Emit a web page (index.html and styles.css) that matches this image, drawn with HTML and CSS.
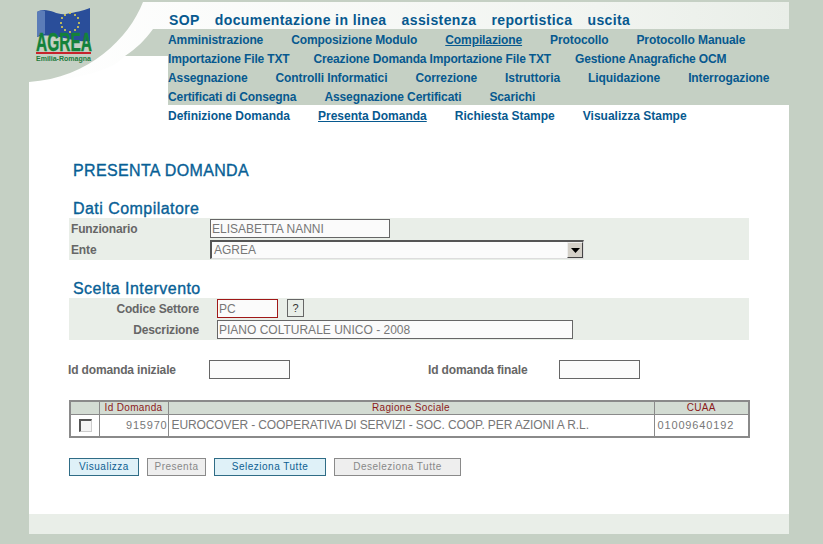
FILE: index.html
```html
<!DOCTYPE html>
<html lang="it">
<head>
<meta charset="utf-8">
<title>Presenta Domanda</title>
<link rel="stylesheet" href="styles.css">
</head>
<body>
<div class="page">
  <header class="header">
    <svg class="header-bg" width="760" height="105" viewBox="0 0 760 105">
      <defs>
        <linearGradient id="fade" x1="0" y1="0" x2="1" y2="0">
          <stop offset="0" stop-color="#ffffff"/>
          <stop offset="0.75" stop-color="#f1f4f0"/>
          <stop offset="1" stop-color="#e9eee8"/>
        </linearGradient>
      </defs>
      <rect x="139" y="29" width="621" height="76" fill="#c5d0c4"/>
      <path d="M0 82C50 80 84 70 96 56L139 56L139 29L760 29L760 2L114 2C100 30 66 76 0 82Z" fill="url(#fade)"/>
      <path d="M124 29L139 29L139 56L96 56C108 48 116 40 124 29Z" fill="#c5d0c4"/>
      <path d="M0 0L760 0L760 2L114 2C100 38 60 78 0 82Z" fill="#c5d0c4"/>
    </svg>
    <div class="logo">
      <svg class="flag" width="56" height="36" viewBox="0 0 56 36">
        <path d="M1 5C12 -1 20 9 30 7C40 5 46 4 54 1L54 34C44 35 38 33 28 31C18 29 10 27 1 30Z" fill="#2a4e9a"/>
        <path d="M1 5C4 3 7 3 9 4L9 27C6 27 3 28 1 30Z" fill="#5b7cb8"/>
        <g fill="#e8d84a">
          <circle cx="34" cy="6" r="1"/><circle cx="39" cy="8" r="1"/><circle cx="42" cy="11" r="1"/><circle cx="43" cy="16" r="1"/><circle cx="42" cy="20" r="1"/><circle cx="39" cy="23" r="1"/><circle cx="34" cy="25" r="1"/><circle cx="29" cy="23" r="1"/><circle cx="26" cy="20" r="1"/><circle cx="25" cy="16" r="1"/><circle cx="26" cy="11" r="1"/><circle cx="29" cy="8" r="1"/>
        </g>
      </svg>
      <div class="logo-name">AGREA</div>
      <div class="logo-rule"></div>
      <div class="logo-sub">Emilia-Romagna</div>
    </div>
    <nav class="menu">
      <div class="menu-top"><a>SOP</a><a>documentazione in linea</a><a>assistenza</a><a>reportistica</a><a>uscita</a></div>
      <div class="menu-row"><a>Amministrazione</a><a>Composizione Modulo</a><a class="on">Compilazione</a><a>Protocollo</a><a>Protocollo Manuale</a></div>
      <div class="menu-row menu-row-tight"><a>Importazione File TXT</a><a>Creazione Domanda Importazione File TXT</a><a>Gestione Anagrafiche OCM</a></div>
      <div class="menu-row"><a>Assegnazione</a><a>Controlli Informatici</a><a>Correzione</a><a>Istruttoria</a><a>Liquidazione</a><a>Interrogazione</a></div>
      <div class="menu-row"><a>Certificati di Consegna</a><a>Assegnazione Certificati</a><a>Scarichi</a></div>
      <div class="menu-row menu-row-last"><a>Definizione Domanda</a><a class="on">Presenta Domanda</a><a>Richiesta Stampe</a><a>Visualizza Stampe</a></div>
    </nav>
  </header>

  <main class="main">
    <h1 class="title">PRESENTA DOMANDA</h1>

    <h2 class="section section-first">Dati Compilatore</h2>
    <div class="band">
      <div class="frow frow-a">
        <label class="lab lab-left">Funzionario</label>
        <input class="field f-funz" value="ELISABETTA NANNI" readonly>
      </div>
      <div class="frow frow-a">
        <label class="lab lab-left">Ente</label>
        <div class="select"><span class="select-val">AGREA</span><span class="select-btn"><svg width="9" height="5" viewBox="0 0 9 5"><path d="M0 0H9L4.5 5Z" fill="#000"/></svg></span></div>
      </div>
    </div>

    <h2 class="section section-second">Scelta Intervento</h2>
    <div class="band">
      <div class="frow frow-b">
        <label class="lab lab-right">Codice Settore</label>
        <input class="field f-cod" value="PC" readonly>
        <button class="qbtn">?</button>
      </div>
      <div class="frow frow-b">
        <label class="lab lab-right">Descrizione</label>
        <input class="field f-desc" value="PIANO COLTURALE UNICO - 2008" readonly>
      </div>
    </div>

    <div class="idrow">
      <label class="lab id-lab">Id domanda iniziale</label>
      <input class="field f-id">
      <label class="lab id-lab id-lab2">Id domanda finale</label>
      <input class="field f-id">
    </div>

    <table class="grid">
      <colgroup><col class="c1"><col class="c2"><col class="c3"><col class="c4"></colgroup>
      <thead>
        <tr><th></th><th>Id Domanda</th><th>Ragione Sociale</th><th>CUAA</th></tr>
      </thead>
      <tbody>
        <tr>
          <td class="cell-check"><span class="check"></span></td>
          <td class="cell-num">915970</td>
          <td class="cell-name">EUROCOVER - COOPERATIVA DI SERVIZI - SOC. COOP. PER AZIONI A R.L.</td>
          <td class="cell-cuaa">01009640192</td>
        </tr>
      </tbody>
    </table>

    <div class="actions">
      <button class="btn btn-on b-vis">Visualizza</button>
      <button class="btn btn-off b-pre">Presenta</button>
      <button class="btn btn-on b-sel">Seleziona Tutte</button>
      <button class="btn btn-off b-des">Deseleziona Tutte</button>
    </div>
  </main>
  <footer class="footer"></footer>
</div>
</body>
</html>
```
FILE: styles.css
```css
* { box-sizing: border-box; }
html, body { margin: 0; padding: 0; }
body {
  background: #c5d0c4;
  height: 544px;
  overflow: hidden;
  font-family: "Liberation Sans", Arial, sans-serif;
}
.page {
  position: relative;
  width: 760px;
  height: 534px;
  margin-left: 29px;
  background: #fff;
  display: flex;
  flex-direction: column;
}
.header { position: relative; height: 105px; flex: none; }
.header-bg { position: absolute; left: 0; top: 0; display: block; }

.logo { position: absolute; left: 7px; top: 7px; width: 56px; height: 56px; }
.flag { display: block; }
.logo-name {
  position: absolute; left: 0; top: 22px;
  font: bold 25px/26px "Liberation Sans", sans-serif;
  color: #13823a;
  -webkit-text-stroke: .4px #13823a;
  transform: scaleX(.62);
  transform-origin: 0 0;
}
.logo-rule { position: absolute; left: 0; top: 45px; width: 55px; height: 2px; background: #c8232c; }
.logo-sub {
  position: absolute; left: 0; top: 47px;
  font: bold 7px/9px "Liberation Sans", sans-serif;
  color: #1f7a3c;
  white-space: nowrap;
}

.menu { position: relative; padding: 10px 0 0 139px; color: #07598f; }
.menu a { color: #07598f; white-space: nowrap; }
.menu-top {
  display: flex; gap: 15px; height: 21px; align-items: center;
  padding-left: 1px; padding-bottom: 1px;
  font: bold 14px/20px "Liberation Sans", sans-serif;
  letter-spacing: .4px;
}
.menu-row {
  display: flex; gap: 28px; height: 19px; align-items: center;
  font: bold 12px/19px "Liberation Sans", sans-serif;
  letter-spacing: -.1px;
}
.menu-row-tight { gap: 24px; letter-spacing: -.15px; }
.menu-row-last { letter-spacing: 0; gap: 28px; }
.menu-row .on { text-decoration: underline; }

.main { flex: 1; padding: 0 0 0 40px; }
.title {
  margin: 56px 0 0 4px;
  font: normal 16px/20px "Liberation Sans", sans-serif;
  letter-spacing: .35px;
  color: #085f96;
  -webkit-text-stroke: .35px #085f96;
}
.section {
  margin: 0 0 0 4px;
  padding-top: 1px;
  font: normal 16px/20px "Liberation Sans", sans-serif;
  letter-spacing: .45px;
  color: #085f96;
  -webkit-text-stroke: .35px #085f96;
  height: 20px;
}
.section-first { margin-top: 17px; }
.section-second { margin-top: 18px; }
.band { width: 680px; height: 42px; background: #e9eee8; padding-top: 1px; }
.frow { display: flex; height: 21px; align-items: flex-start; }
.lab {
  font: bold 12px/21px "Liberation Sans", sans-serif;
  letter-spacing: -.15px;
  color: #666;
  white-space: nowrap;
}
.lab-left { width: 141px; padding-left: 2px; }
.lab-right { width: 130px; margin-right: 18px; text-align: right; }
.field {
  display: block;
  height: 19px;
  padding: 0 1px;
  border: 1px solid #666;
  background: #fbfbfb;
  color: #777;
  font: 12px/17px "Liberation Sans", sans-serif;
  border-radius: 0;
  outline: 0;
}
.f-funz { width: 180px; }
.f-cod { width: 61px; border-color: #a01818; }
.f-desc { width: 356px; }
.f-id { width: 81px; }
.select {
  width: 374px; height: 19px;
  display: flex; align-items: center;
  justify-content: space-between;
  background: #fbfbfb;
  border-top: 2px solid #555;
  border-left: 2px solid #555;
  border-right: 1px solid #ddd;
  border-bottom: 1px solid #ddd;
}
.select-val { padding-left: 2px; font-size: 12px; color: #777; }
.select-btn {
  width: 16px; height: 16px;
  display: flex; align-items: center; justify-content: center;
  background: #d4d0c8;
  border-top: 1px solid #eee; border-left: 1px solid #eee;
  border-right: 1px solid #444; border-bottom: 1px solid #444;
}
.qbtn {
  width: 17px; height: 18px; margin-left: 9px; padding: 0;
  background: #e9eee8;
  border: 1px solid #666;
  font: 11px/16px "Liberation Sans", sans-serif;
  color: #333;
}
.idrow { display: flex; align-items: flex-start; margin: 20px 0 0 -1px; height: 19px; }
.id-lab { width: 141px; }
.id-lab2 { width: 131px; margin-left: 138px; }

.grid {
  display: table;
  margin: 21px 0 0 0;
  width: 679px;
  height: 37px;
  table-layout: fixed;
  border-collapse: collapse;
  border: 2px solid #8a8a8a;
  font-family: "Liberation Sans", sans-serif;
}
.c1 { width: 29px; }
.c2 { width: 69px; }
.c3 { width: 486px; }
.c4 { width: 95px; }
.grid th {
  height: 13px;
  padding: 0;
  background: #d3dcd3;
  border: 1px solid #8a8a8a;
  border-top: 0;
  font: normal 10px/12px "Liberation Sans", sans-serif;
  letter-spacing: .35px;
  color: #8b1a1a;
}
.grid td {
  height: 22px;
  padding: 0 2px;
  border: 1px solid #8a8a8a;
  font-size: 12px;
  color: #777;
  white-space: nowrap;
}
.grid .cell-name { letter-spacing: -.1px; padding-left: 3px; }
.grid .cell-num { text-align: right; padding-right: 0; font-size: 11px; letter-spacing: .8px; }
.grid .cell-check { text-align: center; padding: 0 0 0 2px; }
.grid .cell-cuaa { padding-left: 3px; font-size: 11px; letter-spacing: .85px; }
.check {
  display: inline-block; width: 13px; height: 13px;
  margin-top: 3px;
  background: #f4f4f4;
  border-top: 2px solid #555; border-left: 2px solid #555;
  border-right: 1px solid #ccc; border-bottom: 1px solid #ccc;
}

.actions { display: flex; gap: 8px; margin-top: 20px; }
.btn {
  height: 18px; padding: 0;
  font: 10px/16px "Liberation Sans", sans-serif;
  letter-spacing: .5px;
  border-radius: 0;
}
.btn-on { background: #dff1f8; border: 1px solid #2f6c86; color: #0e5f92; }
.btn-off { background: #eeeeee; border: 1px solid #8a8a8a; color: #888; }
.b-vis { width: 70px; }
.b-pre { width: 59px; }
.b-sel { width: 112px; }
.b-des { width: 127px; }

.footer { height: 20px; flex: none; background: #e9eee8; }
```
